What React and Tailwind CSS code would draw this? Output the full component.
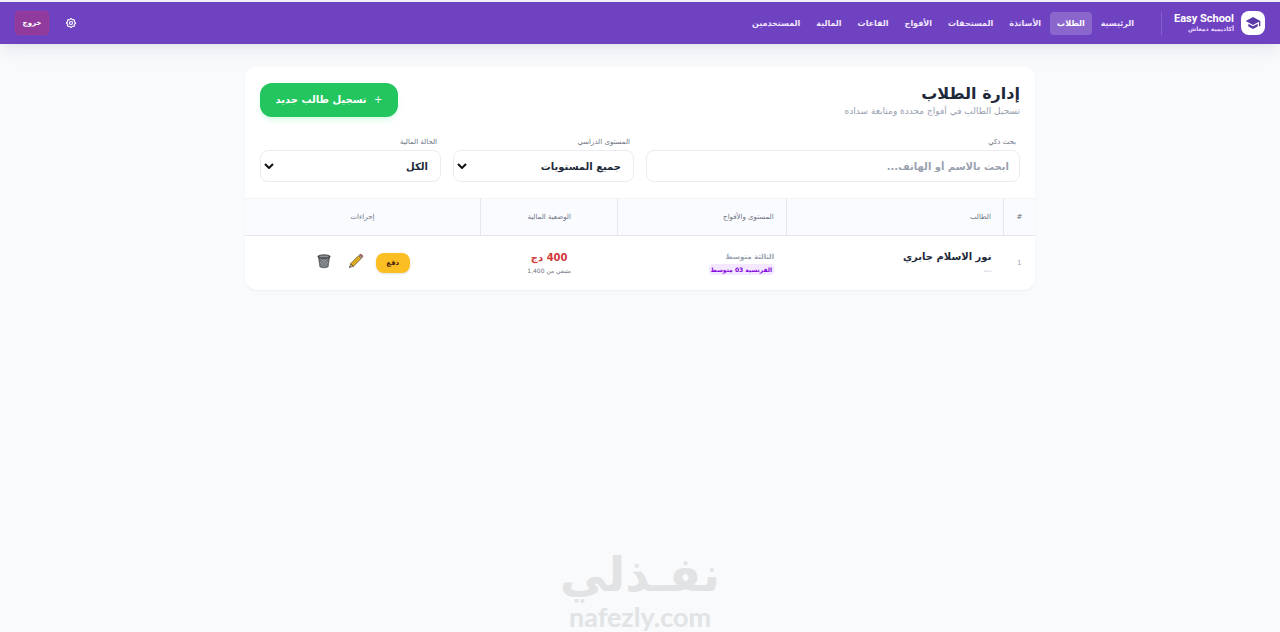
import React, { useState } from 'react';

const navigation = [
    { id: 1, value: 'الرئيسية', path: '#home' },
    { id: 2, value: 'الطلاب', path: '#students' },
    { id: 3, value: 'الأساتذة', path: '#teachers' },
    { id: 4, value: 'المستحقات', path: '#dues' },
    { id: 5, value: 'الأفواج', path: '#groups' },
    { id: 6, value: 'القاعات', path: '#rooms' },
    { id: 7, value: 'المالية', path: '#finance' },
    { id: 8, value: 'المستخدمين', path: '#users' },
];

const students = [
    {
        id: 1,
        name: 'نور الاسلام جابري',
        phone: '---',
        level: 'الثالثة متوسط',
        group: 'الفرنسية 03 متوسط',
        due: '400 دج',
        rest: 'متبقي من 1,400',
    },
];

const GraduationIcon = () => (
    <svg viewBox="0 0 24 24" className="size-4" fill="#5b3aa8" aria-hidden="true">
        <path d="M12 3 1 9l11 6 9-4.9V17h2V9L12 3Z" />
        <path d="M5 13.2v4L12 21l7-3.8v-4L12 17l-7-3.8Z" />
    </svg>
);

const GearIcon = () => (
    <svg
        viewBox="0 0 24 24"
        className="size-3"
        fill="none"
        stroke="currentColor"
        strokeWidth="2.2"
        strokeLinejoin="round"
        aria-hidden="true"
    >
        <path d="M10.300 4.300c.4-1.800 2.900-1.800 3.400 0a1.700 1.700 0 0 0 2.600 1.100c1.500-.9 3.300.8 2.400 2.400a1.700 1.700 0 0 0 1 2.500c1.800.4 1.800 2.900 0 3.400a1.700 1.700 0 0 0-1 2.600c.9 1.500-.8 3.300-2.400 2.400a1.700 1.700 0 0 0-2.600 1c-.4 1.800-2.900 1.800-3.400 0a1.700 1.700 0 0 0-2.600-1c-1.500.9-3.300-.8-2.400-2.400a1.700 1.700 0 0 0-1-2.600c-1.800-.4-1.800-2.900 0-3.400a1.700 1.700 0 0 0 1-2.500c-.9-1.600.8-3.300 2.400-2.400 1 .6 2.300.1 2.600-1.100Z" />
        <circle cx="12" cy="12" r="3" />
    </svg>
);

const PencilIcon = () => (
    <svg viewBox="0 0 16 16" className="size-4" aria-hidden="true">
        <path d="M1.5 14.5 2.6 10.800 5.200 13.400Z" fill="#e8c9a0" stroke="#4a3b2a" strokeWidth=".6" />
        <path d="M2.600 10.800 10.900 2.500 13.500 5.100 5.200 13.400Z" fill="#f2bd24" stroke="#4a3b12" strokeWidth=".8" />
        <path d="M3.900 12.100 12.200 3.800" stroke="#b07d10" strokeWidth=".7" />
        <path d="m10.900 2.500.8-.8 2.600 2.600-.8.8Z" fill="#a9b0b5" stroke="#555" strokeWidth=".4" />
        <path d="m11.700 1.700.5-.5c.8-.6 3.200 1.600 2.600 2.600l-.5.500Z" fill="#c4606a" stroke="#6b3a40" strokeWidth=".4" />
        <path d="m1.500 14.500.4-1.400 1 1Z" fill="#222" />
    </svg>
);

const TrashIcon = () => (
    <svg viewBox="0 0 16 16" className="size-4" aria-hidden="true">
        <path d="M2.500 4h11l-1.400 9.600c-.3 1.500-7.900 1.500-8.200 0Z" fill="#6e7275" stroke="#3d4042" strokeWidth=".7" />
        <path
            d="m4 5 7.500 8M7 5l5 5.500M4.500 9l4 5M12 5l-7.500 8M9 5 4 10.500M11.800 8.500 8 14"
            stroke="#aeb3b6"
            strokeWidth=".5"
        />
        <ellipse cx="8" cy="3.600" rx="6.200" ry="1.800" fill="#55595c" stroke="#333638" strokeWidth=".7" />
        <ellipse cx="8" cy="3.400" rx="4.400" ry=".9" fill="#8b9093" />
    </svg>
);

const Header = () => (
    <header className="flex h-11 items-center border-t-2 border-[#f3f0fa] bg-[#6f42c1] px-[15px] shadow-lg shadow-gray-300/40">
        <div className="flex items-center gap-[7px]">
            <span className="flex size-6 items-center justify-center rounded-lg bg-white">
                <GraduationIcon />
            </span>
            <div className="text-left">
                <div className="font-['Roboto'] text-[11px] font-bold leading-3 text-white" dir="ltr">
                    Easy School
                </div>
                <div className="text-right text-[6px] font-bold leading-[8px] text-purple-200">أكاديمية دمعاش</div>
            </div>
        </div>
        <nav className="mr-3 flex items-center gap-[2px] border-r border-white/15 pr-5">
            {navigation.map(nav => (
                <a
                    key={nav.id}
                    href={nav.path}
                    className={
                        nav.id === 2
                            ? 'rounded bg-white/20 px-[7px] py-1 text-[8px] font-bold leading-[15px] text-white'
                            : 'px-[7px] py-1 text-[8px] font-bold leading-[15px] text-purple-100'
                    }
                >
                    {nav.value}
                </a>
            ))}
        </nav>
        <div className="mr-auto flex items-center gap-4">
            <button type="button" aria-label="الإعدادات" className="text-white">
                <GearIcon />
            </button>
            <button
                type="button"
                className="h-6 w-[34px] rounded border border-[#a03a92] bg-[#8f3a9c] text-[7px] font-bold text-white"
            >
                خروج
            </button>
        </div>
    </header>
);

const SelectField = ({ id, label, options }) => (
    <div className="flex-[181]">
        <label htmlFor={id} className="block px-1 text-[7px] leading-4 text-gray-500">
            {label}
        </label>
        <div className="relative">
            <select
                id={id}
                className="block h-8 w-full appearance-none rounded-lg border border-[#ebecef] bg-white px-3 text-[10px] font-bold text-gray-800 outline-none"
            >
                {options.map(option => (
                    <option key={option}>{option}</option>
                ))}
            </select>
            <svg
                viewBox="0 0 10 6"
                className="pointer-events-none absolute left-1 top-[13px] h-[6px] w-[10px]"
                fill="none"
                stroke="#111"
                strokeWidth="2"
                aria-hidden="true"
            >
                <path d="m1 1 4 4 4-4" />
            </svg>
        </div>
    </div>
);

const StudentTable = () => (
    <table className="w-full table-fixed border-collapse">
        <colgroup>
            <col className="w-[4%]" />
            <col className="w-[27.5%]" />
            <col className="w-[21.3%]" />
            <col className="w-[17.4%]" />
            <col />
        </colgroup>
        <thead>
            <tr className="h-[37px] border-b border-t border-b-gray-200 border-t-gray-100 bg-[#fafbfe] text-[7px] text-gray-500">
                <th className="border-l border-gray-200 font-normal">#</th>
                <th className="border-l border-gray-200 px-3 text-right font-normal">الطالب</th>
                <th className="border-l border-gray-200 px-3 text-right font-normal">المستوى والأفواج</th>
                <th className="border-l border-gray-200 font-normal">الوضعية المالية</th>
                <th className="font-normal">إجراءات</th>
            </tr>
        </thead>
        <tbody>
            {students.map(student => (
                <tr key={student.id} className="h-[54px]">
                    <td className="text-center text-[7px] text-gray-400">{student.id}</td>
                    <td className="px-3">
                        <div className="text-[10px] font-bold leading-4 text-gray-800">{student.name}</div>
                        <div className="text-[7px] leading-3 text-gray-400">{student.phone}</div>
                    </td>
                    <td className="px-3">
                        <div className="text-[7px] font-bold leading-[14px] text-gray-400">{student.level}</div>
                        <span className="block w-fit rounded-sm bg-purple-100 px-[2px] text-[6px] font-bold leading-[11px] text-purple-700">
                            {student.group}
                        </span>
                    </td>
                    <td className="text-center">
                        <div className="text-[10px] font-bold leading-4 text-[#d03a3a]">{student.due}</div>
                        <div className="text-[6px] leading-[10px] text-gray-500">{student.rest}</div>
                    </td>
                    <td>
                        <div className="flex items-center justify-center gap-3">
                            <button
                                type="button"
                                className="h-5 w-[34px] rounded-lg bg-[#fbbf24] text-[7px] font-bold text-[#4a1d0a] shadow-sm"
                            >
                                دفع
                            </button>
                            <button type="button" aria-label="تعديل" className="pb-1">
                                <PencilIcon />
                            </button>
                            <button type="button" aria-label="حذف" className="mr-1 pb-1">
                                <TrashIcon />
                            </button>
                        </div>
                    </td>
                </tr>
            ))}
        </tbody>
    </table>
);

const App = () => {
    const [valueInput, setValueInput] = useState('');

    return (
        <div
            dir="rtl"
            className="flex min-h-screen flex-col bg-[#f8fafc] font-['DejaVu_Sans',sans-serif] text-gray-800"
        >
            <Header />
            <main className="mx-auto mt-[23px] w-full max-w-[790px] overflow-hidden rounded-xl bg-white shadow-xs">
                <div className="flex items-center justify-between px-[15px] pt-4">
                    <div>
                        <h1 className="text-[16px] font-bold leading-[22px]">إدارة الطلاب</h1>
                        <p className="text-[9px] leading-3 text-gray-400">تسجيل الطالب في أفواج محددة ومتابعة سداده</p>
                    </div>
                    <button
                        type="button"
                        className="h-[34px] w-[138px] rounded-xl bg-[#22c55e] pb-[2px] text-[10px] font-bold text-white shadow-md shadow-green-100"
                    >
                        <span className="ml-1 font-normal">+</span> تسجيل طالب جديد
                    </button>
                </div>
                <div className="flex gap-3 px-[15px] pb-4 pt-[17px]">
                    <div className="flex-[374]">
                        <label htmlFor="search" className="block px-1 text-[7px] leading-4 text-gray-500">
                            بحث ذكي
                        </label>
                        <input
                            id="search"
                            className="block h-8 w-full rounded-lg border border-[#ebecef] bg-white px-[10px] text-[10px] font-bold outline-none placeholder:text-gray-400"
                            placeholder="ابحث بالاسم أو الهاتف..."
                            value={valueInput}
                            onChange={e => setValueInput(e.target.value)}
                        />
                    </div>
                    <SelectField id="level" label="المستوى الدراسي" options={['جميع المستويات', 'الثالثة متوسط']} />
                    <SelectField id="status" label="الحالة المالية" options={['الكل']} />
                </div>
                <StudentTable />
            </main>
            <footer className="mt-auto flex flex-col items-center pb-px text-[#e2e3e5]">
                <div className="text-[47px] font-bold leading-[56px]">نفـذلي</div>
                <div className="font-['Lato'] text-[27px] font-bold leading-7" dir="ltr">
                    nafezly.com
                </div>
            </footer>
        </div>
    );
};

export default App;
